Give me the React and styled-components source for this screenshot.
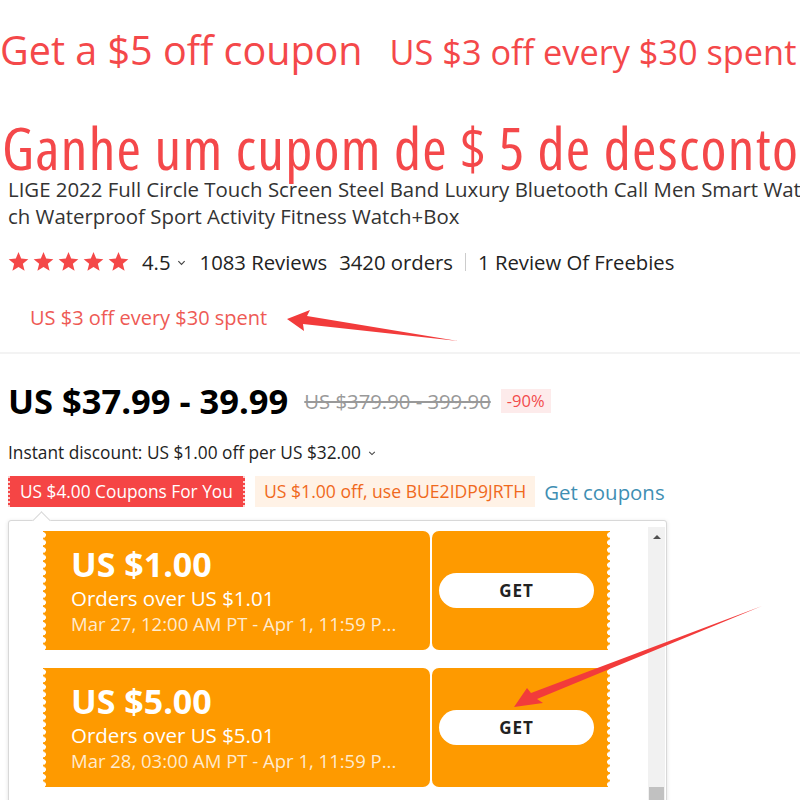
import React from 'react';
import styled, { createGlobalStyle } from 'styled-components';

const GlobalStyle = createGlobalStyle`
  body {
    margin: 0;
    background: #fff;
    font-family: "Open Sans", "Liberation Sans", sans-serif;
  }
`;

const Page = styled.div`
  position: relative;
  width: 800px;
  height: 800px;
  overflow: hidden;
  color: #222;
`;

const PromoLine = styled.div`
  display: flex;
  align-items: baseline;
  gap: 27px;
  margin-top: 23px;
  color: #f4484a;
  white-space: nowrap;
  .big {
    font-size: 39.5px;
  }
  .small {
    font-size: 34.3px;
  }
`;

const Headline = styled.div`
  margin-top: 41px;
  font-size: 59px;
  line-height: 58px;
  letter-spacing: 1.3px;
  font-stretch: condensed;
  color: #f4484a;
  white-space: nowrap;
  padding-left: 2px;
`;

const Title = styled.div`
  width: 796px;
  padding: 0 0 0 8px;
  font-size: 20.4px;
  line-height: 27px;
  color: #333;
  word-break: break-all;
`;

const RatingRow = styled.div`
  display: flex;
  align-items: center;
  padding-left: 8px;
  margin-top: 18px;
  font-size: 20.3px;
  color: #222;
  white-space: nowrap;
  .stars {
    display: flex;
    gap: 4px;
    margin-right: 13px;
  }
  .rate {
    display: flex;
    align-items: center;
    gap: 6px;
    margin-right: 14px;
  }
  .reviews {
    margin-right: 12px;
  }
  .sep {
    width: 1px;
    height: 18px;
    background: #ccc;
    margin: 0 12px;
  }
`;

const SpendNote = styled.div`
  padding-left: 30px;
  margin-top: 28px;
  font-size: 20px;
  color: #ee5a55;
  height: 48px;
  border-bottom: 2px solid #f3f3f3;
`;

const PriceRow = styled.div`
  display: flex;
  align-items: center;
  padding-left: 8px;
  margin-top: 23px;
  white-space: nowrap;
  .now {
    font-size: 34.5px;
    font-weight: 700;
    color: #000;
    margin-right: 16px;
  }
  .was {
    font-size: 20.3px;
    color: #999;
    text-decoration: line-through;
    margin-right: 10px;
  }
  .off {
    background: #fdebeb;
    color: #f24c4c;
    font-size: 16.5px;
    line-height: 24px;
    padding: 0 6px;
  }
`;

const Instant = styled.div`
  display: flex;
  align-items: center;
  gap: 7px;
  padding-left: 8px;
  margin-top: 17px;
  font-size: 17.3px;
  color: #222;
`;

const CouponRow = styled.div`
  display: flex;
  align-items: center;
  padding-left: 8px;
  margin-top: 12px;
  white-space: nowrap;
`;

const RedTag = styled.div`
  background: #f54545;
  color: #fff;
  font-size: 17.3px;
  height: 31px;
  line-height: 31px;
  padding: 0 10px;
  width: 237px;
  box-sizing: border-box;
  border-left: 2px dotted #fbd0d0;
  border-right: 2px dotted #fbd0d0;
  margin-right: 10px;
`;

const CodeTag = styled.div`
  background: #fff2e6;
  color: #f0691c;
  font-size: 17.6px;
  height: 31px;
  line-height: 31px;
  padding: 0 9px;
  margin-right: 9px;
`;

const GetLink = styled.div`
  color: #3f8fb3;
  font-size: 20.4px;
`;

const Panel = styled.div`
  position: relative;
  margin: 13px 0 0 8px;
  width: 659px;
  height: 320px;
  box-sizing: border-box;
  border: 1px solid #d8d8d8;
  border-radius: 3px;
  box-shadow: 0 1px 4px rgba(0, 0, 0, 0.12);
  display: flex;
  background: #fff;
  &::before {
    content: '';
    position: absolute;
    top: -7px;
    left: 26px;
    width: 12px;
    height: 12px;
    background: #fff;
    border-top: 1px solid #d8d8d8;
    border-left: 1px solid #d8d8d8;
    transform: rotate(45deg);
  }
`;

const CouponList = styled.div`
  flex: 1;
  display: flex;
  flex-direction: column;
  gap: 18px;
  padding: 10px 0 0 34px;
`;

const Scrollbar = styled.div`
  width: 17px;
  margin: 6px 1px 0 0;
  background: #f1f1f1;
  display: flex;
  flex-direction: column;
  align-items: center;
  .up {
    margin-top: 8px;
    width: 0;
    height: 0;
    border-left: 4px solid transparent;
    border-right: 4px solid transparent;
    border-bottom: 4px solid #505050;
  }
  .thumb {
    margin-top: 248px;
    width: 15px;
    height: 30px;
    background: #c1c1c1;
  }
`;

const Coupon = styled.div`
  display: flex;
  gap: 2px;
  width: 567px;
  height: 119px;
`;

const scallop = `
  content: '';
  position: absolute;
  top: 0;
  width: 8px;
  height: 100%;
  background: radial-gradient(circle at 4px 4px, #fff 2.6px, transparent 3.2px) repeat-y;
  background-size: 8px 7.5px;
`;

const CouponMain = styled.div`
  position: relative;
  flex: 1;
  background: #fe9a00;
  border-radius: 0 7px 7px 0;
  color: #fff;
  padding: 13px 0 0 28px;
  box-sizing: border-box;
  &::before {
    ${scallop}
    left: -4px;
  }
  .amount {
    font-size: 34px;
    font-weight: 700;
    line-height: 40px;
  }
  .min {
    font-size: 20.5px;
    line-height: 26px;
    margin-top: 1px;
  }
  .dates {
    font-size: 18.5px;
    line-height: 26px;
    color: rgba(255, 255, 255, 0.82);
  }
`;

const CouponSide = styled.div`
  position: relative;
  width: 178px;
  background: #fe9a00;
  border-radius: 7px 0 0 7px;
  display: flex;
  align-items: center;
  padding-left: 7px;
  box-sizing: border-box;
  &::after {
    ${scallop}
    right: -4px;
  }
`;

const GetButton = styled.button`
  width: 155px;
  height: 35px;
  border: none;
  border-radius: 18px;
  background: #fff;
  color: #222;
  font-family: "Open Sans", sans-serif;
  font-size: 17px;
  font-weight: 700;
  letter-spacing: 1px;
`;

const Overlay = styled.svg`
  position: absolute;
  left: 0;
  top: 0;
  pointer-events: none;
`;

const Star = () => (
  <svg width="21" height="20" viewBox="0 0 24 23">
    <path d="M12 0l3.1 7.6 8.2.6-6.3 5.3 2 8L12 17.2 5 21.5l2-8L.7 8.2l8.2-.6z" fill="#f44848" />
  </svg>
);

const Chevron = ({ size = 9 }) => (
  <svg width={size} height={size} viewBox="0 0 10 10">
    <path d="M1.5 3.5L5 7l3.5-3.5" stroke="#444" strokeWidth="1.3" fill="none" />
  </svg>
);

const coupons = [
  { amount: 'US $1.00', min: 'Orders over US $1.01', dates: 'Mar 27, 12:00 AM PT - Apr 1, 11:59 P...' },
  { amount: 'US $5.00', min: 'Orders over US $5.01', dates: 'Mar 28, 03:00 AM PT - Apr 1, 11:59 P...' },
];

export default function App() {
  return (
    <Page>
      <GlobalStyle />
      <PromoLine>
        <span className="big">Get a $5 off coupon</span>
        <span className="small">US $3 off every $30 spent</span>
      </PromoLine>
      <Headline>Ganhe um cupom de $ 5 de desconto</Headline>
      <Title>
        LIGE 2022 Full Circle Touch Screen Steel Band Luxury Bluetooth Call Men Smart Watch Waterproof Sport Activity Fitness Watch+Box
      </Title>
      <RatingRow>
        <div className="stars">
          {[0, 1, 2, 3, 4].map(i => <Star key={i} />)}
        </div>
        <span className="rate">4.5 <Chevron /></span>
        <span className="reviews">1083 Reviews</span>
        <span>3420 orders</span>
        <span className="sep" />
        <span>1 Review Of Freebies</span>
      </RatingRow>
      <SpendNote>US $3 off every $30 spent</SpendNote>
      <PriceRow>
        <span className="now">US $37.99 - 39.99</span>
        <span className="was">US $379.90 - 399.90</span>
        <span className="off">-90%</span>
      </PriceRow>
      <Instant>
        Instant discount: US $1.00 off per US $32.00 <Chevron size={8} />
      </Instant>
      <CouponRow>
        <RedTag>US $4.00 Coupons For You</RedTag>
        <CodeTag>US $1.00 off, use BUE2IDP9JRTH</CodeTag>
        <GetLink>Get coupons</GetLink>
      </CouponRow>
      <Panel>
        <CouponList>
          {coupons.map(c => (
            <Coupon key={c.amount}>
              <CouponMain>
                <div className="amount">{c.amount}</div>
                <div className="min">{c.min}</div>
                <div className="dates">{c.dates}</div>
              </CouponMain>
              <CouponSide>
                <GetButton>GET</GetButton>
              </CouponSide>
            </Coupon>
          ))}
        </CouponList>
        <Scrollbar>
          <div className="up" />
          <div className="thumb" />
        </Scrollbar>
      </Panel>
      <Overlay width="800" height="800">
        <polygon points="287,319 310,310 307,316 458,341 303,324 304,331" fill="#f23b3b" />
        <polygon points="514,707 527,688 531,693 762,606 537,699 543,703" fill="#f23b3b" />
      </Overlay>
    </Page>
  );
}
